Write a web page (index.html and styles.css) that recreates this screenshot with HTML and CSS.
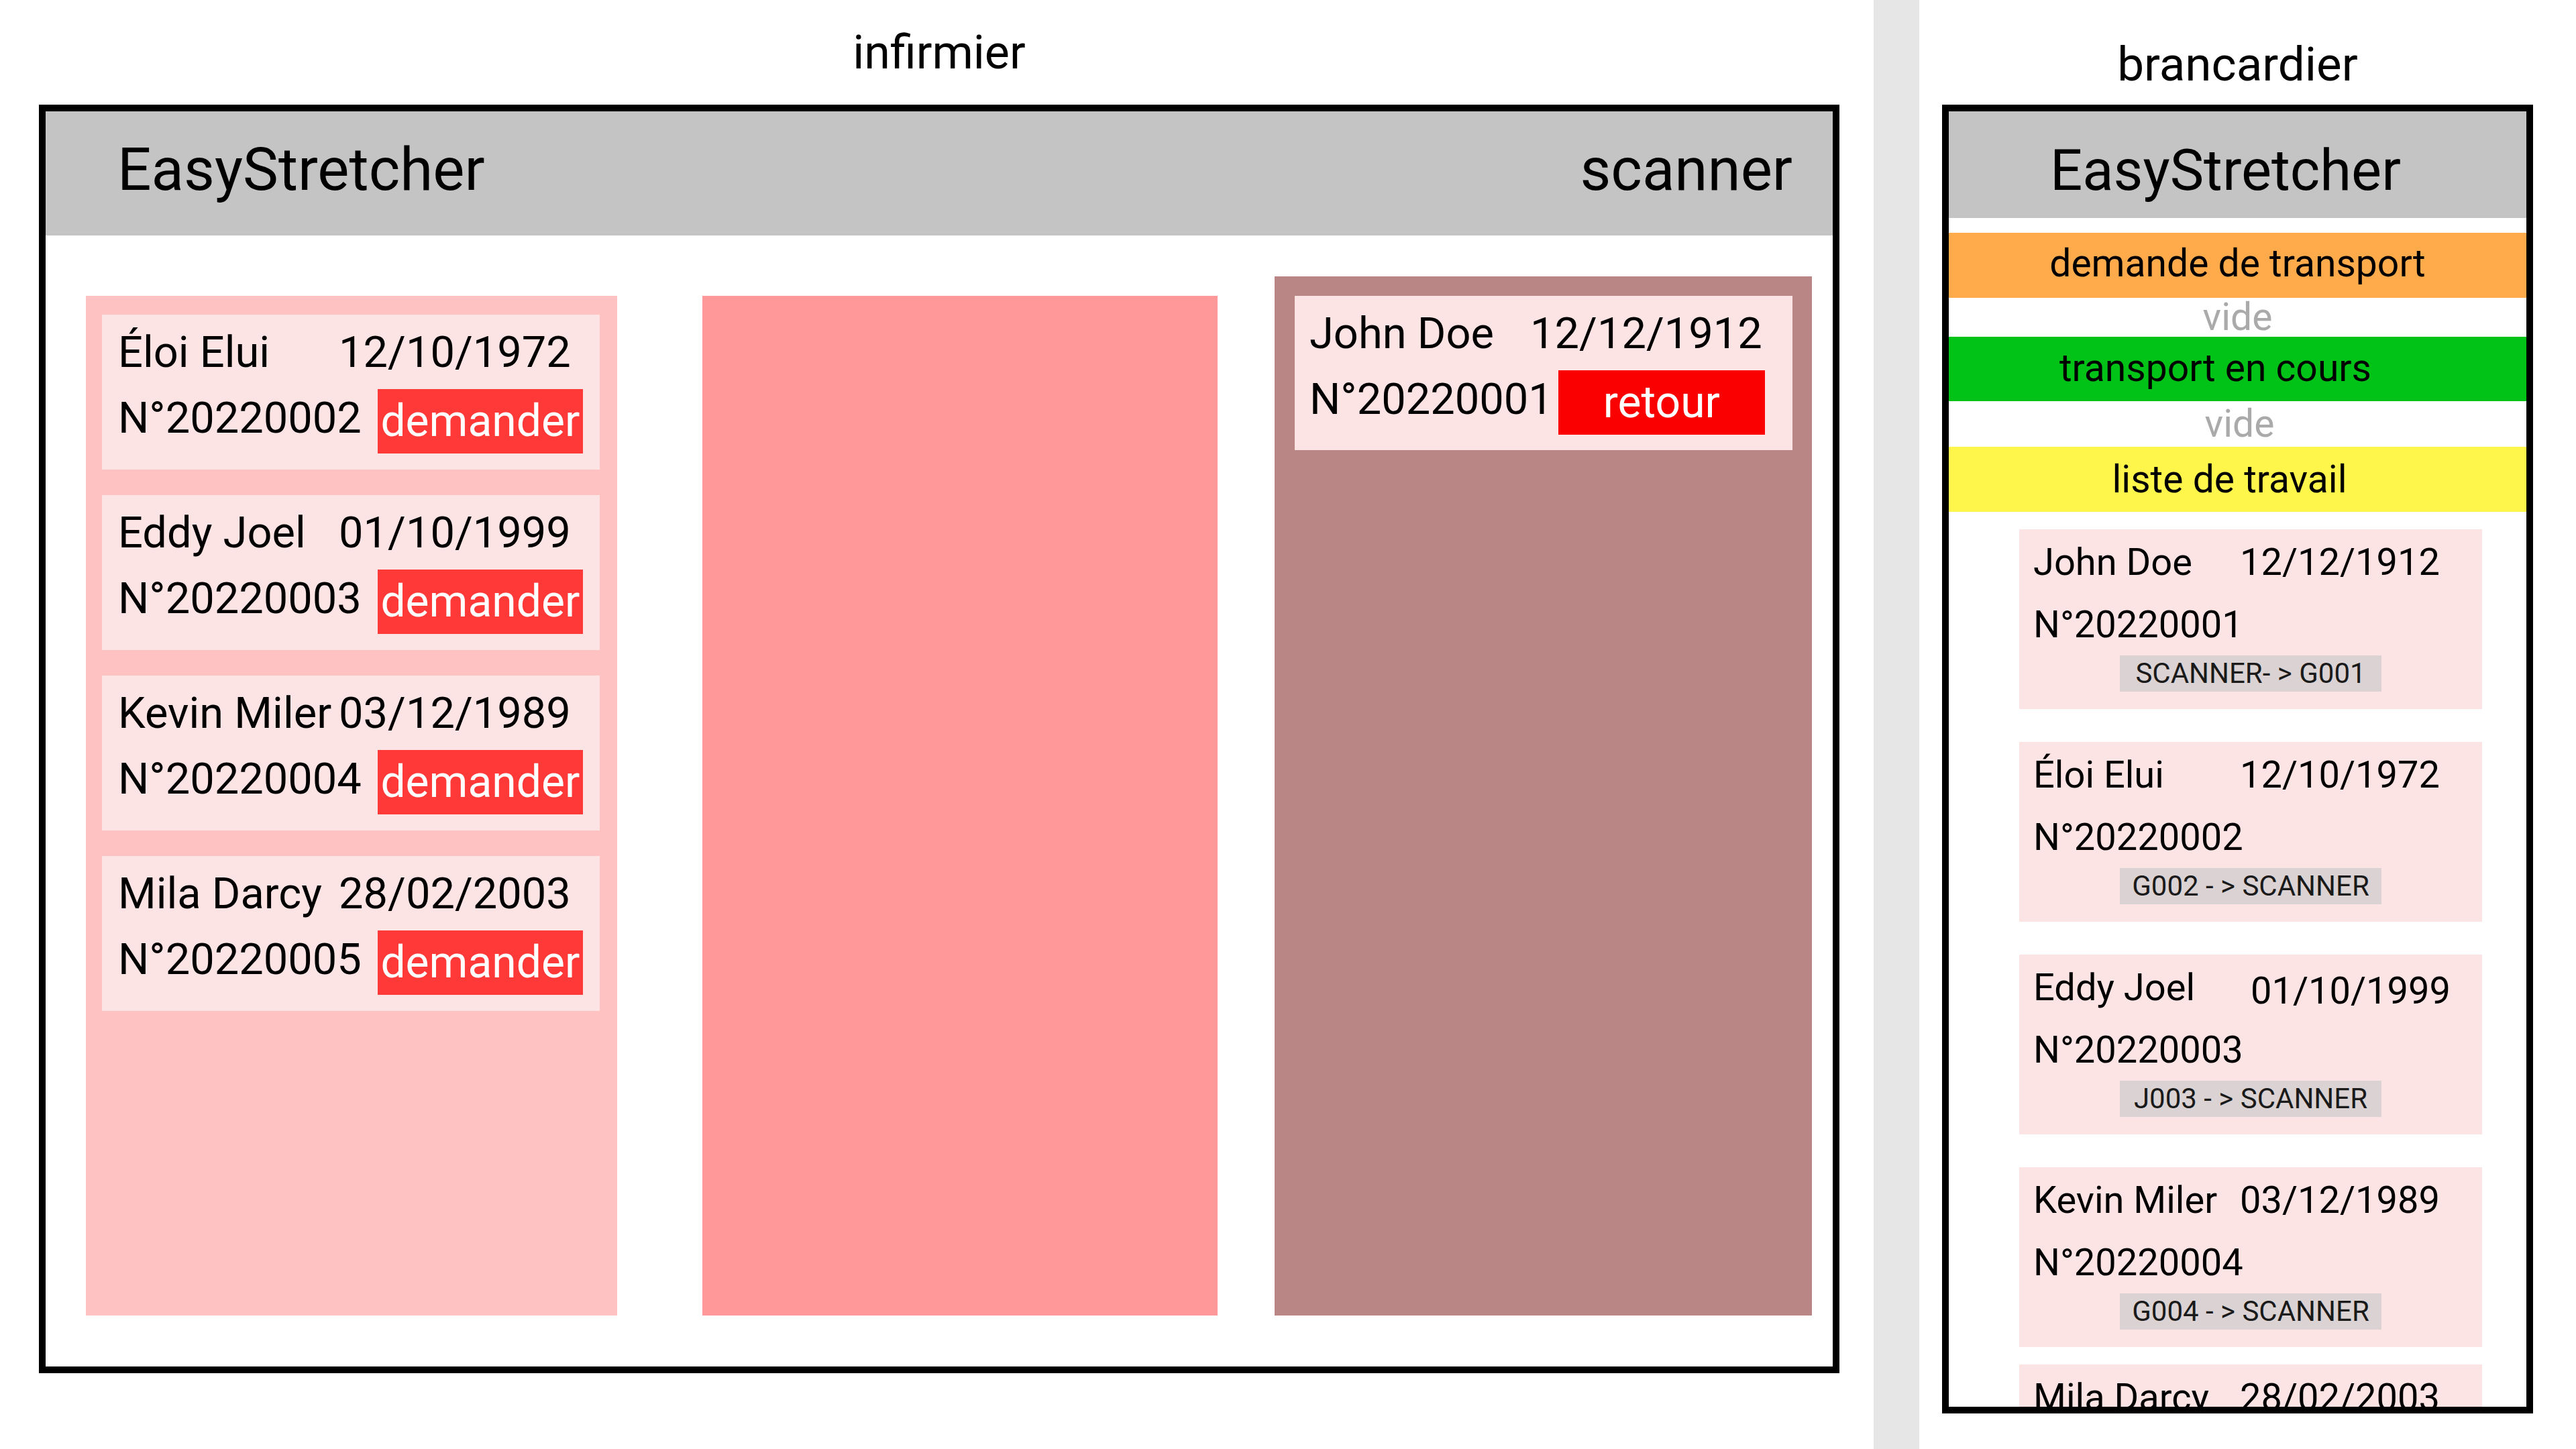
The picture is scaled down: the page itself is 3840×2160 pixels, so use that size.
FILE: index.html
```html
<!DOCTYPE html>
<html lang="fr">
<head>
<meta charset="utf-8">
<title>EasyStretcher</title>
<link rel="stylesheet" href="styles.css">
</head>
<body>
<div class="page">
  <section class="view view-nurse">
    <h1 class="view-title">infirmier</h1>
    <div class="frame frame-nurse">
      <header class="appbar">
        <span class="brand">EasyStretcher</span>
        <span class="service">scanner</span>
      </header>
      <div class="board">
        <div class="col col-waiting">
          <div class="pcard">
            <div class="pline1"><span class="pname">Éloi Elui</span><span class="pdate">12/10/1972</span></div>
            <div class="pline2"><span class="pnum">N°20220002</span><button class="btn btn-ask">demander</button></div>
          </div>
          <div class="pcard">
            <div class="pline1"><span class="pname">Eddy Joel</span><span class="pdate">01/10/1999</span></div>
            <div class="pline2"><span class="pnum">N°20220003</span><button class="btn btn-ask">demander</button></div>
          </div>
          <div class="pcard">
            <div class="pline1"><span class="pname">Kevin Miler</span><span class="pdate">03/12/1989</span></div>
            <div class="pline2"><span class="pnum">N°20220004</span><button class="btn btn-ask">demander</button></div>
          </div>
          <div class="pcard">
            <div class="pline1"><span class="pname">Mila Darcy</span><span class="pdate">28/02/2003</span></div>
            <div class="pline2"><span class="pnum">N°20220005</span><button class="btn btn-ask">demander</button></div>
          </div>
        </div>
        <div class="col col-middle"></div>
        <div class="col col-scanner">
          <div class="pcard pcard-scan">
            <div class="pline1"><span class="pname">John Doe</span><span class="pdate">12/12/1912</span></div>
            <div class="pline2"><span class="pnum">N°20220001</span><button class="btn btn-back">retour</button></div>
          </div>
        </div>
      </div>
    </div>
  </section>

  <div class="divider"></div>

  <section class="view view-porter">
    <h1 class="view-title porter-title">brancardier</h1>
    <div class="frame frame-porter">
      <header class="appbar-center"><span class="brand-center">EasyStretcher</span></header>
      <div class="band band-orange">demande de transport</div>
      <div class="empty empty-1">vide</div>
      <div class="band band-green">transport en cours</div>
      <div class="empty empty-2">vide</div>
      <div class="band band-yellow">liste de travail</div>
      <div class="wlist">
        <div class="wcard">
          <div class="wline1"><span class="wname">John Doe</span><span class="wdate">12/12/1912</span></div>
          <div class="wline2">N°20220001</div>
          <div class="wtag">SCANNER- &gt; G001</div>
        </div>
        <div class="wcard">
          <div class="wline1"><span class="wname">Éloi Elui</span><span class="wdate">12/10/1972</span></div>
          <div class="wline2">N°20220002</div>
          <div class="wtag">G002 - &gt; SCANNER</div>
        </div>
        <div class="wcard">
          <div class="wline1"><span class="wname">Eddy Joel</span><span class="wdate wdate-shift">01/10/1999</span></div>
          <div class="wline2">N°20220003</div>
          <div class="wtag">J003 - &gt; SCANNER</div>
        </div>
        <div class="wcard">
          <div class="wline1"><span class="wname">Kevin Miler</span><span class="wdate">03/12/1989</span></div>
          <div class="wline2">N°20220004</div>
          <div class="wtag">G004 - &gt; SCANNER</div>
        </div>
        <div class="wcard wcard-last">
          <div class="wline1"><span class="wname">Mila Darcy</span><span class="wdate">28/02/2003</span></div>
          <div class="wline2">N°20220005</div>
          <div class="wtag">G005 - &gt; SCANNER</div>
        </div>
      </div>
    </div>
  </section>
</div>
</body>
</html>
```

FILE: styles.css
```css
* { box-sizing: border-box; }

html, body {
  margin: 0;
  padding: 0;
  background: #ffffff;
}

body {
  font-family: Roboto, "Liberation Sans", Arial, sans-serif;
  color: #000;
  width: 3840px;
  height: 2160px;
  overflow: hidden;
}

.page {
  display: flex;
  flex-direction: row;
  align-items: stretch;
  height: 2160px;
}

.view { display: flex; flex-direction: column; }

.view-nurse { margin-left: 58px; width: 2684px; }

.view-porter { margin-left: 34px; width: 881px; }

.divider {
  margin-left: 51px;
  width: 68px;
  background: #e6e6e6;
}

.view-title {
  margin: 0;
  height: 156px;
  padding-top: 37px;
  font-size: 70px;
  line-height: 82px;
  font-weight: 400;
  text-align: center;
}

.porter-title {
  padding-top: 54px;
  font-size: 71px;
  line-height: 83px;
}

.frame {
  border: 10px solid #000;
  background: #fff;
}

.frame-nurse {
  height: 1891px;
  display: flex;
  flex-direction: column;
}

.frame-porter {
  height: 1951px;
  overflow: hidden;
  display: flex;
  flex-direction: column;
}

/* nurse app bar */
.appbar {
  height: 185px;
  flex: none;
  background: #c4c4c4;
  display: flex;
  justify-content: space-between;
  padding: 0 60px 12px 107px;
  line-height: 173px;
  font-size: 89px;
}

/* board */
.board {
  flex: 1;
  display: flex;
  align-items: flex-end;
  padding: 0 0 76px 60px;
}

.col { flex: none; }

.col-waiting {
  width: 792px;
  height: 1520px;
  background: #fec2c2;
  padding: 28px 0 0 24px;
  display: flex;
  flex-direction: column;
  gap: 38px;
}

.col-middle {
  margin-left: 127px;
  width: 768px;
  height: 1520px;
  background: #ff9999;
}

.col-scanner {
  margin-left: 85px;
  width: 801px;
  height: 1549px;
  background: #b98585;
  padding: 29px 0 0 30px;
}

.pcard {
  width: 742px;
  height: 231px;
  background: #fde4e4;
  padding: 16px 0 0 24px;
  font-size: 65px;
}

.pcard-scan { height: 230px; padding-left: 22px; }

.pline1 {
  display: flex;
  line-height: 80px;
  white-space: nowrap;
}

.pname { width: 329px; flex: none; }

.pline2 {
  display: flex;
  align-items: flex-start;
  margin-top: 15px;
  height: 96px;
}

.pnum {
  line-height: 86px;
  white-space: nowrap;
}

.btn {
  border: none;
  padding: 0;
  margin: 0;
  font-family: inherit;
  color: #fff;
  font-size: 66px;
  line-height: 96px;
  height: 96px;
  text-align: center;
}

.btn-ask {
  width: 306px;
  margin-left: 24px;
  background: #ff3838;
}

.btn-back {
  width: 308px;
  margin-left: 8px;
  background: #fa0000;
}

/* porter app */
.appbar-center {
  height: 159px;
  flex: none;
  background: #c4c4c4;
  padding: 38px 36px 0 0;
  text-align: center;
  font-size: 85px;
  line-height: 100px;
}

.band {
  flex: none;
  margin-top: 0;
  height: 97px;
  font-size: 57px;
  line-height: 97px;
  text-align: center;
  white-space: nowrap;
}

.band-orange {
  margin-top: 22px;
  background: #ffab4b;
  line-height: 91px;
}

.band-green {
  height: 96px;
  line-height: 94px;
  background: #00c217;
  padding-right: 66px;
}

.band-yellow {
  background: #fff64b;
  padding-right: 24px;
}

.empty {
  flex: none;
  font-size: 57px;
  color: #aaaaaa;
  text-align: center;
}

.empty-1 { height: 58px; line-height: 58px; }

.empty-2 { height: 68px; line-height: 68px; padding-left: 6px; }

.wlist {
  flex: none;
  padding: 26px 0 0 105px;
  display: flex;
  flex-direction: column;
  gap: 49px;
}

.wcard {
  flex: none;
  width: 690px;
  height: 268px;
  background: #fde4e4;
  padding: 14px 0 0 21px;
  font-size: 56px;
}

.wcard-last { margin-top: -23px; }

.wline1 {
  display: flex;
  line-height: 70px;
  white-space: nowrap;
}

.wname { width: 308px; flex: none; }

.wdate-shift { padding-left: 16px; position: relative; top: 5px; }

.wline2 {
  margin-top: 23px;
  line-height: 70px;
  white-space: nowrap;
}

.wtag {
  margin: 11px 0 0 129px;
  width: 390px;
  height: 54px;
  background: #dbd3d3;
  color: #1a1a1a;
  font-size: 42px;
  line-height: 54px;
  text-align: center;
  white-space: nowrap;
}
```
